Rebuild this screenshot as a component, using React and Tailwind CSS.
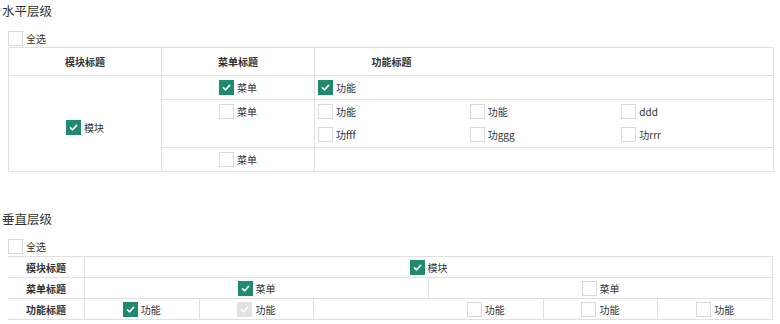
import React from "react";

function Box({ on = false, disabled = false }) {
  const tone = disabled
    ? "border-[#e2e2e2] bg-[#e2e2e2]"
    : on
    ? "border-[#208a6c] bg-[#208a6c]"
    : "border-[#d9d9d9] bg-white";
  return (
    <span className={`grid h-[15px] w-[15px] shrink-0 place-items-center border ${tone}`}>
      {(on || disabled) && (
        <svg width="11" height="11" viewBox="0 0 11 11">
          <polyline points="2.5,5.8 4.6,7.8 8.6,3.4" fill="none" stroke="#fff" strokeWidth="1.6" strokeLinecap="round" strokeLinejoin="round" />
        </svg>
      )}
    </span>
  );
}

function Check({ label, on, disabled }) {
  return (
    <span className="flex items-center gap-[3px] text-[10px] leading-[15px] text-[#333]">
      <Box on={on} disabled={disabled} />
      <span>{label}</span>
    </span>
  );
}

function Title({ children, className = "" }) {
  return <div className={`h-[22px] pl-[2px] text-[12.5px] leading-[22px] text-[#333] ${className}`}>{children}</div>;
}

const cell = "border-r border-b border-[#e0e0e0]";

function Horizontal() {
  return (
    <div>
      <Title>水平层级</Title>
      <div className="mt-[9px] ml-2 h-[16px]">
        <Check label="全选" />
      </div>
      <div className="ml-2 grid w-[765px] grid-cols-[153px_153px_459px] grid-rows-[28px_24px_48px_24px] border-t border-l border-[#e0e0e0] text-[10px] text-[#333]">
        <div className={`${cell} flex items-center justify-center font-bold`}>模块标题</div>
        <div className={`${cell} flex items-center justify-center font-bold`}>菜单标题</div>
        <div className={`${cell} flex items-center`}>
          <span className="w-[153px] text-center font-bold">功能标题</span>
        </div>

        <div className={`${cell} row-span-3 flex items-center justify-center pt-[8px]`}>
          <Check label="模块" on />
        </div>
        <div className={`${cell} flex items-center justify-center`}>
          <Check label="菜单" on />
        </div>
        <div className={`${cell} flex items-center pl-[3px]`}>
          <Check label="功能" on />
        </div>

        <div className={`${cell} flex items-start justify-center pt-[4px]`}>
          <Check label="菜单" />
        </div>
        <div className={`${cell} grid grid-cols-3 content-start gap-y-[8px] pt-[4px] pl-[3px]`}>
          <Check label="功能" />
          <Check label="功能" />
          <Check label="ddd" />
          <Check label="功fff" />
          <Check label="功ggg" />
          <Check label="功rrr" />
        </div>

        <div className={`${cell} flex items-center justify-center`}>
          <Check label="菜单" />
        </div>
        <div className={cell} />
      </div>
    </div>
  );
}

function Vertical() {
  const row = "grid h-[21px] grid-cols-[77px_repeat(6,1fr)] border-b border-[#e0e0e0]";
  const label = "flex items-center justify-center border-r border-[#e0e0e0] font-bold";
  const c = "flex items-center justify-center border-r border-[#e0e0e0]";
  return (
    <div className="mt-[36px]">
      <Title>垂直层级</Title>
      <div className="mt-[9px] ml-2 h-[16px]">
        <Check label="全选" />
      </div>
      <div className="mt-px ml-2 w-[765px] border-t border-[#e0e0e0] text-[10px] text-[#333]">
        <div className={row}>
          <div className={label}>模块标题</div>
          <div className={`${c} col-span-6`}>
            <Check label="模块" on />
          </div>
        </div>
        <div className={row}>
          <div className={label}>菜单标题</div>
          <div className={`${c} col-span-3`}>
            <Check label="菜单" on />
          </div>
          <div className={`${c} col-span-3`}>
            <Check label="菜单" />
          </div>
        </div>
        <div className={row}>
          <div className={label}>功能标题</div>
          <div className={c}>
            <Check label="功能" on />
          </div>
          <div className={c}>
            <Check label="功能" disabled />
          </div>
          <div />
          <div className={c}>
            <Check label="功能" />
          </div>
          <div className={c}>
            <Check label="功能" />
          </div>
          <div className={c}>
            <Check label="功能" />
          </div>
        </div>
      </div>
    </div>
  );
}

export default function App() {
  return (
    <div className="h-[324px] w-[780px] bg-white font-['Noto_Sans_CJK_SC',sans-serif]">
      <Horizontal />
      <Vertical />
    </div>
  );
}
